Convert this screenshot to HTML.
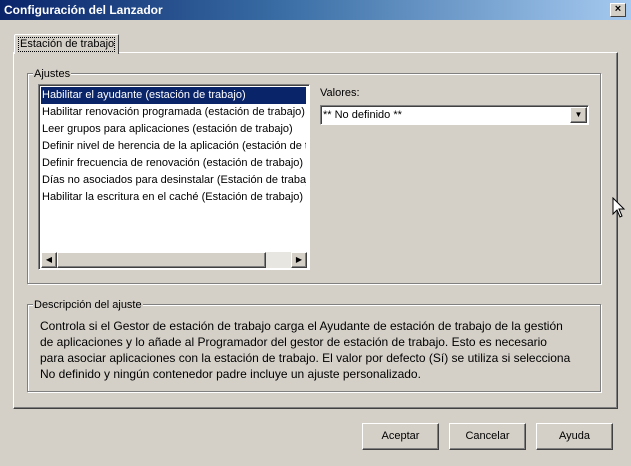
<!DOCTYPE html>
<html><head><style>
*{margin:0;padding:0;box-sizing:border-box}
body{width:631px;height:466px;background:#d4d0c8;font-family:"Liberation Sans",Arial,sans-serif;font-size:11px;color:#000;position:relative;overflow:hidden}
.abs{position:absolute}
.title{left:0;top:0;width:631px;height:20px;background:linear-gradient(90deg,#0a246a 0%,#3a6ea5 45%,#a6caf0 100%);color:#fff;font-weight:bold;font-size:12px;line-height:20px;padding-left:4px}
.x{left:610px;top:3px;width:16px;height:14px;background:#d4d0c8;border:1px solid;border-color:#fff #404040 #404040 #fff;font-size:11px;line-height:11px;text-align:center;font-weight:bold;color:#000}
.group{border:1px solid #808080;box-shadow:1px 1px 0 #fff, inset 1px 1px 0 #fff}
.lbl{background:#d4d0c8;padding:0 1px;line-height:12px}
.sunk{border:1px solid;border-color:#808080 #fff #fff #808080;box-shadow:inset 1px 1px 0 #404040}
.row{position:absolute;left:2px;width:265px;height:17px;line-height:17px;padding-left:1px;white-space:nowrap;overflow:hidden}
.btn{width:77px;height:27px;border:1px solid;border-color:#fff #404040 #404040 #fff;box-shadow:inset -1px -1px 0 #808080;text-align:center;line-height:25px;font-size:11px}
.sb{width:16px;height:16px;background:#d4d0c8;border:1px solid;border-color:#fff #404040 #404040 #fff;box-shadow:inset -1px -1px 0 #808080}
</style></head><body>
<div class="abs title">Configuración del Lanzador</div>
<div class="abs x">×</div>

<div class="abs" style="left:13px;top:52px;width:605px;height:357px;border:1px solid;border-color:#fff #404040 #404040 #fff;box-shadow:inset -1px -1px 0 #808080"></div>
<div class="abs" style="left:14px;top:34px;width:105px;height:20px;background:#d4d0c8;border:1px solid;border-bottom:none;border-color:#fff #404040 #404040 #fff;border-radius:2px 2px 0 0"></div>
<div class="abs" style="left:18px;top:37px;width:97px;height:15px;border:1px dotted #000;line-height:13px;padding-left:1px;white-space:nowrap;font-size:11px">Estación de trabajo</div>

<div class="abs group" style="left:27px;top:73px;width:574px;height:211px"></div>
<div class="abs lbl" style="left:33px;top:68px">Ajustes</div>

<div class="abs sunk" style="left:38px;top:84px;width:272px;height:186px;background:#fff">
 <div class="row" style="top:2px;background:#0a246a;color:#fff">Habilitar el ayudante (estación de trabajo)</div>
 <div class="row" style="top:19px">Habilitar renovación programada (estación de trabajo)</div>
 <div class="row" style="top:36px">Leer grupos para aplicaciones (estación de trabajo)</div>
 <div class="row" style="top:53px">Definir nivel de herencia de la aplicación (estación de trabajo)</div>
 <div class="row" style="top:70px">Definir frecuencia de renovación (estación de trabajo)</div>
 <div class="row" style="top:87px">Días no asociados para desinstalar (Estación de trabajo)</div>
 <div class="row" style="top:104px">Habilitar la escritura en el caché (Estación de trabajo)</div>
 <div class="abs" style="left:2px;top:167px;width:266px;height:16px;background:#e8e6e0"></div>
 <div class="abs sb" style="left:2px;top:167px;font-size:8px;line-height:13px;text-align:center">◀</div>
 <div class="abs sb" style="left:18px;top:167px;width:209px"></div>
 <div class="abs sb" style="left:252px;top:167px;font-size:8px;line-height:13px;text-align:center">▶</div>
</div>

<div class="abs" style="left:320px;top:87px">Valores:</div>
<div class="abs sunk" style="left:320px;top:105px;width:269px;height:20px;background:#fff;line-height:18px;padding-left:2px">** No definido **
 <div class="abs sb" style="left:249px;top:1px;width:17px;height:16px;font-size:8px;line-height:14px;text-align:center">▼</div>
</div>

<div class="abs group" style="left:27px;top:304px;width:574px;height:88px"></div>
<div class="abs lbl" style="left:33px;top:299px">Descripción del ajuste</div>
<div class="abs" style="left:40px;top:318px;width:560px;font-size:12px;line-height:16px">Controla si el Gestor de estación de trabajo carga el Ayudante de estación de trabajo de la gestión<br>de aplicaciones y lo añade al Programador del gestor de estación de trabajo. Esto es necesario<br>para asociar aplicaciones con la estación de trabajo. El valor por defecto (Sí) se utiliza si selecciona<br>No definido y ningún contenedor padre incluye un ajuste personalizado.</div>

<div class="abs btn" style="left:362px;top:423px">Aceptar</div>
<div class="abs btn" style="left:449px;top:423px">Cancelar</div>
<div class="abs btn" style="left:536px;top:423px">Ayuda</div>

<svg class="abs" style="left:612px;top:197px" width="14" height="22" viewBox="0 0 14 22"><path d="M1 1 L1 17 L5 13 L8 20 L10 19 L7 12 L12 12 Z" fill="#fff" stroke="#000" stroke-width="1"/></svg>
</body></html>
